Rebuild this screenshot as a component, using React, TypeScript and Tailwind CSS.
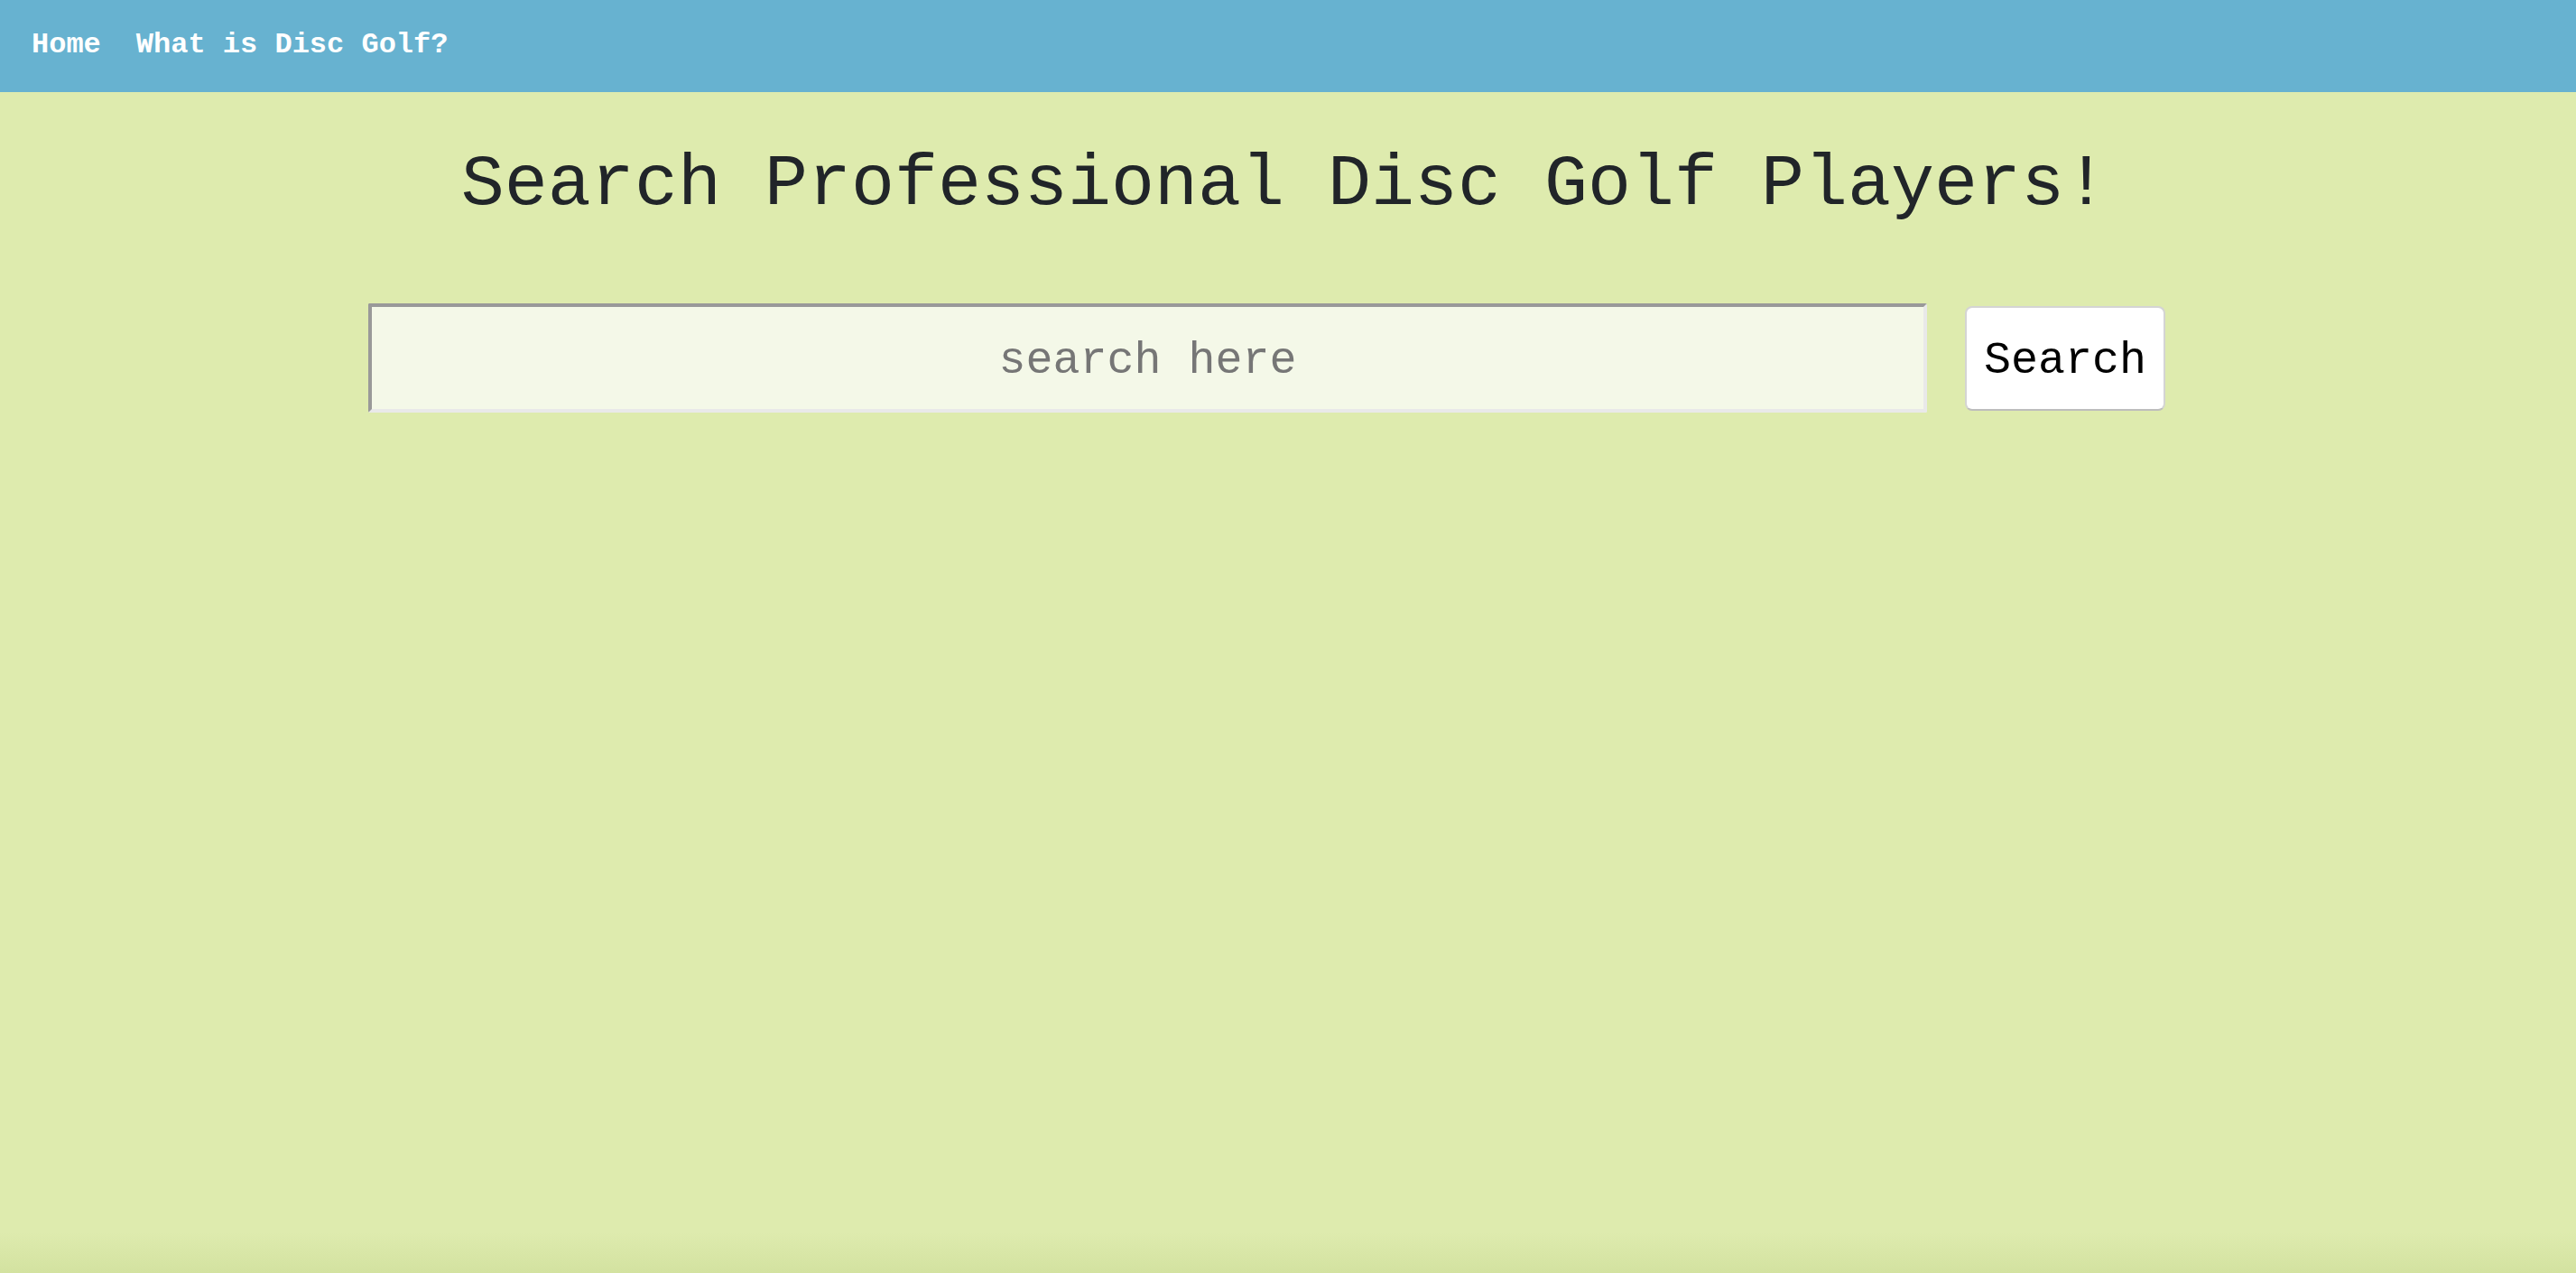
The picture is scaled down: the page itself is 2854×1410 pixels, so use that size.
import React from 'react'

export default function App() {
  const links = ['Home', 'What is Disc Golf?']

  return (
    <div className="relative min-h-screen flex flex-col bg-[#deebae] font-['Liberation_Mono','Courier_New',monospace]">
      <nav className="h-[102px] bg-[#67b2d0] flex items-center pl-[35px] gap-[39px] pb-[2px]">
        {links.map((link) => (
          <a key={link} href="#" className="text-white font-bold text-[32px] leading-none">
            {link}
          </a>
        ))}
      </nav>

      <h1 className="mt-[58px] text-center text-[80px] leading-[90px] text-[#212529] pr-[8px]">
        Search Professional Disc Golf Players!
      </h1>

      <form
        className="mt-[86px] flex items-center justify-center gap-[42px] pr-[47px]"
        onSubmit={(e) => e.preventDefault()}
      >
        <input
          type="text"
          placeholder="search here"
          className="w-[1727px] h-[121px] pt-[6px] bg-[#f4f8e8] text-center text-[50px] text-black placeholder:text-[#767676] border-4 border-t-[#999999] border-l-[#999999] border-b-[#e9e9e9] border-r-[#e9e9e9] rounded-[2px] outline-none"
        />
        <button
          type="submit"
          className="w-[222px] h-[116px] pt-[6px] bg-white text-black text-[50px] border-2 border-[#d4d4d4] border-b-[#bdbdbd] rounded-[8px]"
        >
          Search
        </button>
      </form>

      <div className="flex-1" />
      {/* soft shadow at the bottom edge */}
      <div className="h-[45px] bg-gradient-to-b from-transparent to-[#d3e2a0]" />
    </div>
  )
}
